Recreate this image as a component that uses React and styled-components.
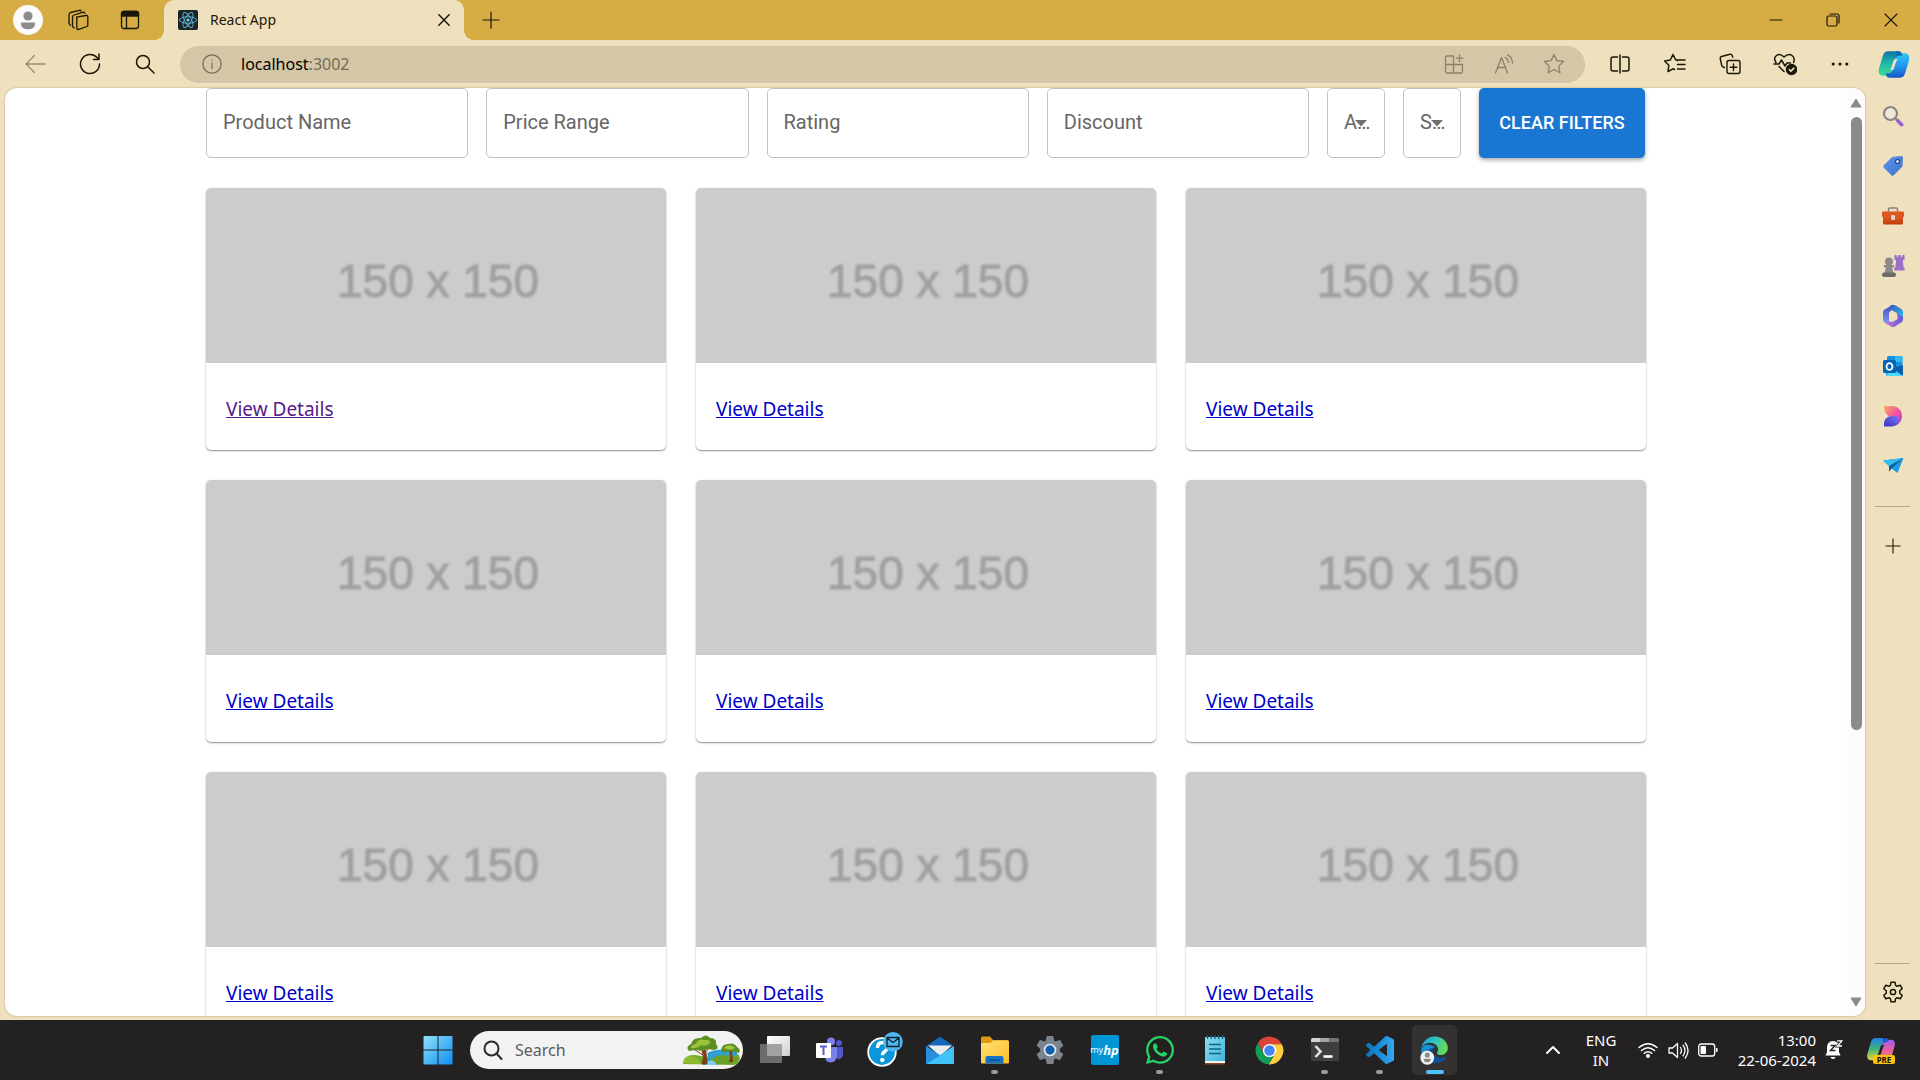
import React from "react";
import styled, { createGlobalStyle, css } from "styled-components";
import { FaWhatsapp } from "react-icons/fa";

const uiFont = '"Segoe UI", "Noto Sans", "Open Sans", sans-serif';
const appFont = 'Roboto, "Noto Sans", sans-serif';

const GlobalStyle = createGlobalStyle`
  * { box-sizing: border-box; }
  body { margin: 0; background: #efe1bd; font-family: ${uiFont}; }
  button { border: 0; padding: 0; background: none; color: inherit; font: inherit; cursor: pointer; }
  svg { display: block; flex: none; }
`;

/* ---------- window ---------- */

const Window = styled.div`
  display: grid;
  grid-template-rows: 40px 48px minmax(0, 1fr) 60px;
  height: 100vh;
  overflow: hidden;
`;

const TitleBar = styled.header`
  display: flex;
  align-items: stretch;
  background: #d6ad45;
  color: #1a1608;
`;

const IconButton = styled.button`
  display: flex;
  align-items: center;
  justify-content: center;
  width: ${(p) => p.$width || 55}px;
  height: ${(p) => p.$height || 40}px;
  flex: none;
  color: ${(p) => p.$color || "#1a1608"};
`;

const TitleTools = styled.div`
  display: flex;
  width: 164px;
`;

const Tab = styled.div`
  position: relative;
  display: flex;
  align-items: center;
  width: 300px;
  padding-left: 14px;
  border-radius: 10px 10px 0 0;
  background: #efe1bd;

  &::before,
  &::after {
    content: "";
    position: absolute;
    bottom: 0;
    width: 10px;
    height: 10px;
  }
  &::before {
    right: 100%;
    background: radial-gradient(circle at 0 0, transparent 10px, #efe1bd 10px);
  }
  &::after {
    left: 100%;
    background: radial-gradient(circle at 100% 0, transparent 10px, #efe1bd 10px);
  }
`;

const TabTitle = styled.span`
  flex: 1;
  padding-left: 12px;
  font-size: 14px;
  line-height: 20px;
`;

const WindowControls = styled.div`
  display: flex;
  margin-left: auto;
`;

const ToolBar = styled.div`
  display: flex;
  align-items: center;
  padding-left: 7px;
  background: #efe1bd;
`;

const AddressBar = styled.div`
  display: flex;
  align-items: center;
  flex: 1;
  height: 37px;
  margin: 0 7px 0 8px;
  padding-left: 4px;
  padding-right: 6px;
  border-radius: 19px;
  background: #d4c6a6;
`;

const Address = styled.div`
  flex: 1;
  padding-left: 2px;
  font-size: 16px;
  line-height: 24px;
  color: #000;
`;

const Port = styled.span`
  color: #746b58;
`;

const Body = styled.div`
  display: flex;
  min-height: 0;
`;

const Page = styled.main`
  display: flex;
  flex: 1;
  min-width: 0;
  margin: 0 0 4px 5px;
  border-radius: 12px;
  overflow: hidden;
  background: #fff;
  box-shadow: 0 0 2px rgba(90, 70, 10, 0.45);
`;

const PageContent = styled.div`
  flex: 1;
  min-width: 0;
  overflow: hidden;
`;

const Container = styled.div`
  width: 100%;
  max-width: 1440px;
  margin: 0 auto;
`;

/* ---------- filters ---------- */

const Filters = styled.form`
  display: flex;
  gap: 18px;
  height: 70px;
  margin: 0 1px 30px 0;
`;

const Field = styled.div`
  display: grid;
  grid-template: minmax(0, 1fr) / minmax(0, 1fr);
  align-items: center;
  ${(p) =>
    p.$compact
      ? css`
          flex: none;
          width: 58px;
        `
      : css`
          flex: 1;
          min-width: 0;
        `}
  > * {
    grid-area: 1 / 1;
  }
`;

const FieldLabel = styled.label`
  z-index: 1;
  padding-left: 17px;
  padding-bottom: 2px;
  overflow: hidden;
  white-space: nowrap;
  pointer-events: none;
  font: 20px/28px ${appFont};
  color: #666;
`;

const controlBox = css`
  width: 100%;
  height: 70px;
  padding: 0 17px;
  border: 1px solid #c0c0c0;
  border-radius: 5px;
  background: #fff;
  font: 20px/28px ${appFont};
  color: #222;
  outline: none;
  appearance: none;
`;

const TextInput = styled.input`
  ${controlBox}
`;

const Select = styled.select`
  ${controlBox}
`;

const Arrow = styled.svg`
  z-index: 2;
  justify-self: end;
  margin-right: 17px;
  pointer-events: none;
`;

const ClearButton = styled.button`
  flex: none;
  width: 166px;
  border-radius: 5px;
  background: #1976d2;
  box-shadow: 0 2px 4px rgba(0, 0, 0, 0.35);
  color: #fff;
  font: 500 18px/30px ${appFont};
`;

/* ---------- products ---------- */

const Products = styled.section`
  display: grid;
  grid-template-columns: repeat(3, minmax(0, 1fr));
  gap: 30px;
`;

const Card = styled.article`
  height: 262px;
  border-radius: 5px;
  overflow: hidden;
  background: #fff;
  box-shadow: 0 1px 1px rgba(0, 0, 0, 0.3), 0 1px 3px rgba(0, 0, 0, 0.18);
`;

const Thumb = styled.div`
  display: flex;
  align-items: center;
  justify-content: center;
  height: 175px;
  padding-top: 10px;
  padding-left: 4px;
  background: #ccc;
  color: #a0a0a0;
  font: 46px/56px "Liberation Sans", Arial, sans-serif;

  span {
    filter: blur(1px);
    -webkit-text-stroke: 1px #a0a0a0;
  }
`;

const CardBody = styled.div`
  padding: 32px 20px;
`;

const DetailsLink = styled.a`
  font-size: 19px;
  line-height: 28px;
  color: ${(p) => (p.$visited ? "#551a8b" : "#0000c8")};
  text-decoration: underline;
`;

/* ---------- scroll bar ---------- */

const ScrollTrack = styled.div`
  display: flex;
  flex-direction: column;
  align-items: center;
  width: 18px;
  padding: 10px 0 9px;
  background: #fcfcfc;
`;

const ScrollArea = styled.div`
  flex: 1;
  width: 11px;
  margin: 9px 0 4px;
`;

const ScrollThumb = styled.div`
  height: 70%;
  border-radius: 6px;
  background: #8b8b8b;
`;

/* ---------- sidebar ---------- */

const SideBar = styled.aside`
  display: flex;
  flex-direction: column;
  align-items: center;
  width: 55px;
  padding: 3px 0 3px;
`;

const Divider = styled.hr`
  width: 35px;
  height: 1px;
  margin: ${(p) => p.$margin};
  border: 0;
  background: #b5a988;
`;

/* ---------- taskbar ---------- */

const TaskBar = styled.footer`
  display: flex;
  align-items: center;
  background: #232122;
  color: #fff;
`;

const TaskSpacer = styled.div`
  flex: 410 1 0;
`;

const TaskGroup = styled.div`
  display: flex;
  align-items: center;
`;

const TaskButton = styled.button`
  position: relative;
  display: flex;
  align-items: center;
  justify-content: center;
  width: ${(p) => (p.$active ? 45 : 55)}px;
  height: 50px;
  margin: 0 ${(p) => (p.$active ? 5 : 0)}px;
  border-radius: 5px;
  background: ${(p) => (p.$active ? "#343132" : "none")};

  &::after {
    content: "";
    position: absolute;
    bottom: 1px;
    display: ${(p) => (p.$running || p.$active ? "block" : "none")};
    width: ${(p) => (p.$active ? 18 : 7)}px;
    height: 4px;
    border-radius: 2px;
    background: ${(p) => (p.$active ? "#4cc2ff" : "#9a9a9a")};
  }
`;

const SearchBox = styled.label`
  display: flex;
  align-items: center;
  width: 273px;
  height: 38px;
  margin: 0 4px 0 5px;
  padding: 0 2px 0 13px;
  border-radius: 19px;
  overflow: hidden;
  background: #f2f2f2;
`;

const SearchInput = styled.input`
  flex: 1;
  min-width: 0;
  padding: 0 0 0 12px;
  border: 0;
  outline: 0;
  background: none;
  font: 16px/24px ${uiFont};
  color: #333;

  &::placeholder {
    color: #5c5c5c;
    opacity: 1;
  }
`;

const MyHp = styled.span`
  display: flex;
  align-items: center;
  justify-content: center;
  width: 28px;
  height: 30px;
  border-radius: 2px;
  background: #0096d6;
  font: 9px/12px ${uiFont};

  i {
    font-size: 13px;
    font-weight: 700;
  }
`;

const Tray = styled.div`
  display: flex;
  flex: 448 1 0;
  align-items: center;
  justify-content: flex-end;
  padding-right: 10px;
`;

const TrayText = styled.div`
  width: ${(p) => p.$width}px;
  text-align: ${(p) => p.$align};
  font-size: 15px;
  line-height: 20px;
  white-space: nowrap;
`;

const SystemButton = styled.button`
  display: flex;
  align-items: center;
  justify-content: space-between;
  width: 102px;
  height: 50px;
  padding: 0 13px 0 9px;
`;

const PreTag = styled.span`
  position: absolute;
  left: 7px;
  top: 19px;
  width: 22px;
  border-radius: 2px;
  background: #ffc20e;
  color: #111;
  font: 700 8px/9px ${uiFont};
  text-align: center;
`;

const Stack = styled.span`
  position: relative;
  display: block;
`;

/* ---------- drawings ---------- */

const Line = ({ s = 22, vb = 24, w = 1.3, children, ...rest }) => (
  <svg width={s} height={s} viewBox={`0 0 ${vb} ${vb}`} fill="none" stroke="currentColor" strokeWidth={w} strokeLinecap="round" strokeLinejoin="round" aria-hidden="true" {...rest}>
    {children}
  </svg>
);

const Art = ({ w = 30, h = 30, vb = "0 0 30 30", children }) => (
  <svg width={w} height={h} viewBox={vb} aria-hidden="true">
    {children}
  </svg>
);

const Grad = ({ id, from, mid, to, x1 = 0, y1 = 0, x2 = 1, y2 = 1 }) => (
  <linearGradient id={id} x1={x1} y1={y1} x2={x2} y2={y2}>
    <stop offset="0" stopColor={from} />
    {mid && <stop offset="0.5" stopColor={mid} />}
    <stop offset="1" stopColor={to} />
  </linearGradient>
);

const ProfileIcon = () => (
  <Art>
    <circle cx="15" cy="15" r="15" fill="#fbfbfb" />
    <circle cx="15" cy="11" r="4.6" fill="#8c8c8c" />
    <path d="M8 17.5h14v1.5c0 3.500-3 5.200-7 5.200s-7-1.700-7-5.200z" fill="#8c8c8c" />
  </Art>
);

const WorkspacesIcon = () => (
  <Line s={22} vb={22}>
    <path d="M9.500 8.200 19 6.500q1.600-.3 1.800 1.200v8.500q0 1-1 1.300l-8 2.900q-1.800.5-2-1.200V10q0-1.400-.3-1.800z" />
    <path d="M5.500 17.500V8q0-1.500 1.600-2l9-2.800M2 14.500V5.500Q2 4 3.500 3.500L12.500 1.300M2 14.500l1.500 1.800M5.500 17.500l1.600 1.500M12.500 1.300q1-.2 1.600.7M16.500 3.200q1-.1 1.400 1" />
  </Line>
);

const VerticalTabsIcon = () => (
  <Line s={20} vb={20}>
    <rect x="1.500" y="1.500" width="17" height="17" rx="2.500" />
    <path d="M1.500 6V3.500q0-2 2-2h13q2 0 2 2V6z" fill="currentColor" />
    <path d="M6.500 6v12.500" />
  </Line>
);

const ReactLogo = () => (
  <Art w={20} h={20} vb="0 0 20 20">
    <rect width="20" height="20" rx="2" fill="#1d2227" />
    <g fill="none" stroke="#58b9d6" strokeWidth="0.9">
      <ellipse cx="10" cy="10" rx="8.500" ry="3.300" />
      <ellipse cx="10" cy="10" rx="8.500" ry="3.300" transform="rotate(60 10 10)" />
      <ellipse cx="10" cy="10" rx="8.500" ry="3.300" transform="rotate(120 10 10)" />
    </g>
    <circle cx="10" cy="10" r="1.600" fill="#6fd3ef" />
  </Art>
);

const CrossIcon = ({ s, w = 1.3 }) => (
  <Line s={s} vb={14} w={w}>
    <path d="M1 1l12 12M13 1L1 13" />
  </Line>
);

const PlusIcon = ({ s }) => (
  <Line s={s} vb={18} w={1.2}>
    <path d="M9 1v16M1 9h16" />
  </Line>
);

const StarPath = "M12 2.500l2.900 6.100 6.700.9-4.900 4.600 1.200 6.700-5.900-3.300-5.900 3.300 1.200-6.700L2.400 9.500l6.700-.9z";

const CopilotShape = ({ a, b, cut }) => (
  <>
    <path d="M10 2h9c2.500 0 3.300 1.500 3.900 4.300H20c-2.300 0-3.200 1.300-3.900 3.700L13 21c-.8 2.600-2.100 4-4.600 4H5c-4 0-5-3-4-7L4.500 6.500C5.500 3.300 7 2 10 2z" fill={`url(#${a})`} />
    <path transform="rotate(180 15 14.500)" d="M10 2h9c2.500 0 3.300 1.500 3.900 4.300H20c-2.300 0-3.200 1.300-3.900 3.700L13 21c-.8 2.600-2.100 4-4.600 4H5c-4 0-5-3-4-7L4.500 6.500C5.500 3.300 7 2 10 2z" fill={`url(#${b})`} />
    <path d="M16.100 10c.7-2.400 1.600-3.700 3.900-3.700h2.900C22.300 3.500 21.500 2 19 2h-3c2 1 1.500 4 .1 8z" fill={`url(#${a}d)`} />
    <path d="M15.600 9.500h3.200q-1.400 1-2 3l-2 6.500q-.3.500-.9.500h-2.700q1-1 1.500-2.700l1.900-6q.3-1.100 1-1.300z" fill={cut} />
  </>
);

const CopilotIcon = () => (
  <Art w={32} h={31} vb="0 0 30 29">
    <defs>
      <Grad id="cpA" from="#0a74a8" mid="#1fb9a5" to="#3ddc97" x2={0} />
      <Grad id="cpAd" from="#0b5f9c" to="#0f7fc4" />
      <Grad id="cpB" from="#1557c8" mid="#1f9bf0" to="#2ec5f2" x2={0} />
    </defs>
    <CopilotShape a="cpA" b="cpB" cut="#efe1bd" />
  </Art>
);

const SideSearch = () => (
  <Art w={22} h={22} vb="0 0 22 22">
    <circle cx="8.500" cy="8.500" r="6.500" fill="#efe8d8" stroke="#8a8780" strokeWidth="2.200" />
    <path d="M15.500 15.500l4.200 4.200" stroke="#9a63d4" strokeWidth="3.600" strokeLinecap="round" />
    <path d="M13 13l2 2" stroke="#8a8780" strokeWidth="2" />
  </Art>
);

const SideTag = () => (
  <Art w={22} h={22} vb="0 0 22 22">
    <defs><Grad id="tag" from="#5f96ea" to="#3f6fc9" /></defs>
    <path d="M11.500 1.800 19 1q2 0 2 2l-.5 7.500q-.1 1-.8 1.700l-8 8q-1.200 1.200-2.400 0l-7.500-7.500q-1.200-1.200 0-2.400l8-8q.700-.5 1.700-.5z" fill="url(#tag)" />
    <circle cx="15.500" cy="6.500" r="2" fill="#fff" stroke="#274a92" strokeWidth="1.300" />
  </Art>
);

const SideToolbox = () => (
  <Art w={24} h={20} vb="0 0 24 20">
    <defs><Grad id="tb" from="#e8662c" to="#c23a0c" x2={0} /></defs>
    <path d="M7.500 6V3.200q0-1.200 1.200-1.200h6.600q1.200 0 1.200 1.200V6" fill="none" stroke="#84807a" strokeWidth="1.500" />
    <rect x="2" y="8" width="20" height="10.500" rx="1.500" fill="url(#tb)" />
    <rect x="1" y="5.500" width="22" height="5.500" rx="1" fill="#e0561f" />
    <rect x="10.200" y="9" width="3.800" height="5" rx="1" fill="#dcd8d3" />
  </Art>
);

const SideChess = () => (
  <Art w={24} h={24} vb="0 0 24 24">
    <g fill="#8b8a88">
      <circle cx="8" cy="7.500" r="4" />
      <path d="M3 11h10v2.500h-2L12.500 19h-9L5 13.500H3z" />
      <rect x="1" y="18.500" width="14" height="4.500" rx="2" fill="#6d6b69" />
    </g>
    <path d="M13.500 1h2.200v1.800h1.600V1h2.400v1.800h1.600V1h2.200v5h-1.700l.8 7.500h1v3H13.300v-3h1L15.200 6h-1.700z" fill="#9a70c8" />
  </Art>
);

const Side365 = () => (
  <Art w={22} h={24} vb="0 0 22 24">
    <defs>
      <Grad id="mA" from="#4a48c9" to="#7fa5f0" x2={0} />
      <Grad id="mB" from="#3252b8" to="#35c1f1" />
      <Grad id="mC" from="#c77bd8" to="#6756d6" x2={1} y2={0} />
    </defs>
    <path d="M11 1 3 5.200Q1 6.300 1 8.500v7q0 2 1.700 3L7 21V8.500q0-1.500 1.500-2.300L14 3.300z" fill="url(#mA)" />
    <path d="M9 1.300Q11 .2 13 1.300l6 3.400q2 1.100 2 3.300v6.500L15 11V9.200L9.500 6 7 8.500V4.500q0-2.200 2-3.200z" fill="url(#mB)" />
    <path d="M21 13v2.500q0 2-1.800 3.100L13 22.500q-2 1.200-4 0L2.700 18.700 7 17.500l4 .2 4.500-2.800V10l5.500 3z" fill="url(#mC)" />
    <circle cx="11" cy="12" r="3.800" fill="#efe1bd" />
  </Art>
);

const SideOutlook = () => (
  <Art w={22} h={22} vb="0 0 22 22">
    <path d="M5 2.500Q5 1 6.500 1H19q1.500 0 1.500 1.500V12H5z" fill="#1490df" />
    <path d="M13 1h6q1.500 0 1.500 1.500V7H13z" fill="#35b8f1" />
    <path d="M4 10l9 4 8-4v9.500q0 1.500-1.500 1.500h-14Q4 21 4 19.500z" fill="#28a8ea" />
    <path d="M21 10v10.500L10 13z" fill="#0a5ea8" />
    <path d="M4 21h16L10 14z" fill="#50d9ff" />
    <rect x="1" y="5" width="13" height="13" rx="1.500" fill="#0364b8" />
    <ellipse cx="7.500" cy="11.500" rx="3" ry="3.400" fill="none" stroke="#fff" strokeWidth="1.800" />
  </Art>
);

const SideDesigner = () => (
  <Art w={20} h={22} vb="0 0 20 22">
    <defs>
      <Grad id="dA" from="#ffab5e" mid="#f0569c" to="#c634d2" />
      <Grad id="dB" from="#7a7bf5" to="#3a2fc0" x1={1} x2={0} />
    </defs>
    <path d="M1 1h8c6 0 10 4.500 10 10s-4 10-9 10c3-3 2-7-2-9-5-2-7-6-7-11z" fill="url(#dA)" />
    <path d="M1 21.500V19c0-5 3.500-8 8-8 4 0 7.500 1.500 8 3.500-1.500 4.500-5 7-9 7z" fill="url(#dB)" />
  </Art>
);

const SidePlane = () => (
  <Art w={22} h={18} vb="0 0 22 18">
    <path d="M1 3.500 21.500 1 15.500 16 9.500 11.500 7 14.500V9z" fill="#1e9ee0" />
    <path d="M1 3.500 21.500 1 7 9z" fill="#35bdf3" />
    <path d="M7 9 21.500 1 9.500 11.500 7 14.500z" fill="#0c5f9f" />
  </Art>
);

const gearPath = "M10 2.200h4l.6 3.200 1.500.9 3.100-1.100 2 3.500-2.500 2.100v2.400l2.500 2.100-2 3.500-3.100-1.100-1.500.9-.6 3.200h-4l-.6-3.200-1.500-.9-3.100 1.100-2-3.500 2.500-2.100v-2.400L2.800 8.700l2-3.500 3.100 1.100 1.500-.9z";

const GearIcon = () => (
  <Line s={24} vb={24} w={1.500}>
    <path d={gearPath} />
    <circle cx="12" cy="12" r="2.600" />
  </Line>
);

const StartIcon = () => (
  <Art w={30} h={30}>
    <defs><Grad id="win" from="#8fe2ff" to="#0b8df0" /></defs>
    <path d="M1.500 1H14.500V14.500H.500V2q0-1 1-1zM15.500 1H28.500q1 0 1 1V14.500H15.500zM.5 15.500H14.500V29.500H1.500q-1 0-1-1zM15.500 15.500H29.500V28.500q0 1-1 1H15.500z" fill="url(#win)" />
  </Art>
);

const ParkArt = () => (
  <Art w={58} h={30} vb="0 0 58 30">
    <path d="M0 29q2-10 12-9l12 2 12-7q12-2 20 5l1 4q-2 6-7 6z" fill="#79ab2c" />
    <path d="M24 18q8-4 16-3l14-1v6l-12 5-8 5H20q8-5 4-12z" fill="#2f9fd6" />
    <path d="M26 26q6-6 14-6t16 2q-2 7-8 7H33z" fill="#6aa02a" />
    <path d="M22 29q4-5 9-3l3 4H21z" fill="#7fd0ee" />
    <path d="M19 29q3-7 0-14l3-1q2 7 2 15zM12 15l8 5M27 12l-6 7" fill="#7a3f1d" stroke="#7a3f1d" strokeWidth="1" />
    <path d="M46 27q2-5 0-11h3l1 11z" fill="#7a3f1d" />
    <path d="M6 16q-4-4 2-7Q10 2 18 3q5-5 9 0 7 0 6 6 4 5-2 6l-6-1-6 2-6-1z" fill="#5c8f24" />
    <path d="M8 13q0-4 5-4 2-6 8-4 6-1 6 3-4 4-9 2-4 4-10 3z" fill="#9dc23c" />
    <path d="M38 15q1-6 7-6 6-2 9 3 4 2 2 6l-9-2-6 2z" fill="#5c8f24" />
    <path d="M41 13q3-4 8-2l3 2q-5 3-11 0z" fill="#a5c83e" />
    <path d="M0 28q1-8 8-7 7 1 10 8z" fill="#8fbb2e" />
  </Art>
);

const TaskViewIcon = () => (
  <Art w={30} h={28} vb="0 0 30 28">
    <defs><Grad id="tv" from="#ffffff" to="#cfcfcf" /></defs>
    <rect y="8" width="22" height="19" rx="1" fill="#6d6d6d" />
    <rect x="7" y="0" width="23" height="20" rx="1" fill="url(#tv)" />
    <path d="M7 8h15v12H7z" fill="#a2a2a2" />
  </Art>
);

const TeamsIcon = () => (
  <Art w={28} h={26} vb="0 0 28 26">
    <circle cx="23" cy="6" r="3" fill="#5059c9" />
    <path d="M19 10h8v8q-1 5-6 4z" fill="#5059c9" />
    <circle cx="15" cy="4.500" r="4" fill="#7b83eb" />
    <path d="M9 10h12v9q-1 6.500-6.500 6.500T9 19z" fill="#7b83eb" />
    <rect x="0" y="6" width="15" height="15" rx="1" fill="#fff" />
    <path d="M4 9.500h7M7.500 9.500v8.500" stroke="#5b5fc7" strokeWidth="2" />
  </Art>
);

const HelpIcon = () => (
  <Art w={36} h={36} vb="0 0 36 36">
    <circle cx="15" cy="20" r="13.800" fill="#0a96d8" stroke="#fff" strokeWidth="1.800" />
    <path d="M10.500 16q0-5.500 5-5.500t5 4.500q0 2.500-2.500 4.300-2.500 1.600-2.500 4" fill="none" stroke="#fff" strokeWidth="3.400" />
    <circle cx="15.300" cy="28" r="2.200" fill="#fff" />
    <circle cx="26" cy="9.800" r="9.800" fill="#4cb8f0" />
    <path d="M20 5.500h12v9H20zM20 6l6 4.500L32 6" fill="none" stroke="#12222c" strokeWidth="1.300" />
  </Art>
);

const MailIcon = () => (
  <Art w={28} h={28} vb="0 0 28 28">
    <path d="M.5 10 14 .500 27.500 10z" fill="#1467b8" />
    <path d="M2 9.500h24L14 20z" fill="#e9eef3" />
    <path d="M0 10l14 9.500L28 10v16.500q0 1.500-1.500 1.500h-25Q0 28 0 26.500z" fill="#1f9bea" />
    <path d="M0 28 28 10v16.500q0 1.500-1.500 1.500z" fill="#42c3f7" />
    <path d="M0 10l14 9.500L0 28z" fill="#2a8ee0" />
  </Art>
);

const FolderIcon = () => (
  <Art w={28} h={28} vb="0 0 28 28">
    <defs><Grad id="fo" from="#ffe07a" to="#fdbf24" /></defs>
    <path d="M0 6V2Q0 .500 1.500.500H9L12 4H26q1 0 1 1v4H0z" fill="#dc9a13" />
    <path d="M0 7H9.500L12 4.500H27q1 0 1 1V26.500q0 1-1 1H1q-1 0-1-1z" fill="url(#fo)" />
    <path d="M4.500 27.500V22q0-2 2-2h14q2 0 2 2v5.500z" fill="#1473c4" />
    <path d="M8.500 24h10" stroke="#0a4f92" strokeWidth="1.600" />
  </Art>
);

const SettingsIcon = () => (
  <Art w={30} h={30} vb="1 1 22 22">
    <path d={gearPath} fill="#7c858e" stroke="#7c858e" strokeLinejoin="round" />
    <circle cx="12" cy="12" r="4" fill="#0f5fae" stroke="#e8ecf0" strokeWidth="1.200" />
  </Art>
);

const NotepadIcon = () => (
  <Art w={22} h={30} vb="0 0 22 30">
    <defs><Grad id="np" from="#8de0f2" to="#3db2d8" /></defs>
    <rect x="1" y="2" width="20" height="25" rx="1" fill="url(#np)" />
    <path d="M1 26h20v2H1z" fill="#f2f2f2" />
    <path d="M1 28h20v1.500H1z" fill="#8a4a20" />
    <path d="M3.500 0v4M7.300 0v4M11 0v4M14.700 0v4M18.500 0v4" stroke="#1b5f7a" strokeWidth="1.300" />
    <path d="M5 9.500h12M5 14h12M5 18.500h12" stroke="#14647f" strokeWidth="1.500" />
  </Art>
);

const ChromeIcon = () => (
  <Art w={29} h={31} vb="1 1 46 46">
    {[["#db4437", 0], ["#ffcd40", 120], ["#0f9d58", 240]].map(([c, r]) => (
      <path key={c} d="M24 24V14h19.600A22 22 0 0 0 5.540 12.030L15.340 29z" fill={c} transform={`rotate(${r} 24 24)`} />
    ))}
    <circle cx="24" cy="24" r="10.500" fill="#fff" />
    <circle cx="24" cy="24" r="8.300" fill="#4285f4" />
  </Art>
);

const TerminalIcon = () => (
  <Art w={28} h={24} vb="0 0 28 24">
    <rect width="28" height="23" rx="1.500" fill="#3e3e3e" />
    <path d="M1.500 0H9v4H0V1.500Q0 0 1.500 0z" fill="#d2d2d2" />
    <path d="M9 0h9.500v4H9z" fill="#a5a5a5" />
    <path d="M18.500 0h8Q28 0 28 1.500V4h-9.500z" fill="#747474" />
    <path d="M4.500 8l5 5.500-5 5.500" fill="none" stroke="#e2e2e2" strokeWidth="2.600" />
    <path d="M12.500 18.500h9" stroke="#fff" strokeWidth="2.600" />
  </Art>
);

const CodeIcon = () => (
  <Art w={28} h={30} vb="0 0 24 24">
    <defs><Grad id="vs" from="#0b72b8" mid="#1b8cd6" to="#35a8f2" y2={0} /></defs>
    <path d="M23.150 2.587L18.210.210a1.494 1.494 0 0 0-1.705.290l-9.460 8.630-4.120-3.128a.999.999 0 0 0-1.276.057L.327 7.261A1 1 0 0 0 .326 8.740L3.899 12 .326 15.260a1 1 0 0 0 .001 1.479L1.650 17.940a.999.999 0 0 0 1.276.057l4.120-3.128 9.460 8.630a1.492 1.492 0 0 0 1.704.290l4.942-2.377A1.500 1.500 0 0 0 24 20.060V3.939a1.500 1.500 0 0 0-.850-1.352zm-5.146 14.861L10.826 12l7.178-5.448v10.896z" fill="url(#vs)" />
  </Art>
);

const EdgeIcon = () => (
  <Art w={29} h={31} vb="0 0 48 50">
    <defs>
      <Grad id="edA" from="#1a9fd8" mid="#2fc2c8" to="#5fdc5a" y2={0.3} />
      <Grad id="edB" from="#1b9de2" to="#0c59a4" />
    </defs>
    <path d="M2 26c0 12 10 20 22 20 9 0 17-5 20-11-6 4-19 3-23-5-2-5 1-9 4-10C18 13 3 14 2 26z" fill="url(#edB)" />
    <path d="M21 30c4 8 17 9 23 5-3 6-9 11-20 11-7 0-14-9-11-18 2-6 7-8 12-8-3 1-6 5-4 10z" fill="#0e4f9b" />
    <path d="M2 24C3 11 12 2 24 2c13 0 22 9 22 19 0 8-6 11.500-11 11.500S28 31 28 29c0-1 2-2 2-6 0-6-6-11-13-11-8 0-14 5-15 12z" fill="url(#edA)" />
    <circle cx="12" cy="37" r="11.500" fill="#f3f3f3" />
    <circle cx="12" cy="32.500" r="4.200" fill="#8a8a8a" />
    <path d="M6 38.500h12q0 6-6 6t-6-6z" fill="#8a8a8a" />
  </Art>
);

const WifiIcon = () => (
  <Line s={20} vb={20} w={1.500}>
    <path d="M1 7.500q9-7.500 18 0M3.500 10.500q6.500-5.500 13 0M6.300 13.300q3.700-3 7.400 0" />
    <circle cx="10" cy="16" r="1.300" fill="currentColor" />
  </Line>
);

const VolumeIcon = () => (
  <Line s={21} vb={21} w={1.300}>
    <path d="M1 8h3.500L9.500 3.500v14L4.500 13H1zM12.500 7.500q2 3 0 6M15 5.200q4 5.300 0 10.600M17.300 3q5.500 7.500 0 15" />
  </Line>
);

const BatteryIcon = () => (
  <Art w={20} h={14} vb="0 0 20 14">
    <rect x="0.700" y="1" width="16" height="12" rx="2.500" fill="none" stroke="#fff" strokeWidth="1.300" />
    <path d="M18 5h.8q.9 0 .9 2t-.9 2H18z" fill="#fff" />
    <rect x="2.500" y="3" width="5.500" height="8" rx="1" fill="#fff" />
  </Art>
);

const BellIcon = () => (
  <Art w={18} h={20} vb="0 0 18 20">
    <path d="M8 1Q2 1.500 2 7.500V12L.500 15.500H15.500L14 12V7.500Q14 1 8 1z" fill="#fff" />
    <path d="M5.500 17h5q-.5 2-2.500 2t-2.500-2z" fill="#fff" />
    <path d="M5.500 5.500h4.500L5.500 10.500H10.500" fill="none" stroke="#232122" strokeWidth="1.400" />
    <path d="M11.500.5h5.500L13 6h4.500" fill="none" stroke="#232122" strokeWidth="3.200" />
    <path d="M12 .900h4.800L12.500 6h4.500" fill="none" stroke="#fff" strokeWidth="1.300" />
  </Art>
);

const CopilotPreIcon = () => (
  <Stack>
    <Art w={30} h={28} vb="0 0 30 29">
      <defs>
        <Grad id="cqA" from="#1f7fe8" mid="#3fb37a" to="#e8d43a" x2={0} />
        <Grad id="cqAd" from="#1746c0" to="#2a6fe6" />
        <Grad id="cqB" from="#f7a24a" mid="#ee5f9d" to="#a35bf0" x2={0} />
      </defs>
      <CopilotShape a="cqA" b="cqB" cut="#232122" />
    </Art>
    <PreTag>PRE</PreTag>
  </Stack>
);

/* ---------- data ---------- */

const textFilters = [
  ["name", "Product Name"],
  ["price", "Price Range"],
  ["rating", "Rating"],
  ["discount", "Discount"],
];

const selectFilters = [
  ["availability", "A…"],
  ["sort", "S…"],
];

const products = Array.from({ length: 9 }, (_, i) => ({ id: i + 1, visited: i === 0 }));

const sideApps = [
  ["Search", SideSearch],
  ["Shopping", SideTag],
  ["Tools", SideToolbox],
  ["Games", SideChess],
  ["Microsoft 365", Side365],
  ["Outlook", SideOutlook],
  ["Designer", SideDesigner],
  ["Drop", SidePlane],
];

const taskApps = [
  ["Task view", <TaskViewIcon />],
  ["Teams", <TeamsIcon />],
  ["Help", <HelpIcon />],
  ["Mail", <MailIcon />],
  ["File Explorer", <FolderIcon />, "running"],
  ["Settings", <SettingsIcon />],
  ["HP", <MyHp>my<i>hp</i></MyHp>],
  ["WhatsApp", <FaWhatsapp size={32} color="#25d366" />, "running"],
  ["Notepad", <NotepadIcon />],
  ["Chrome", <ChromeIcon />],
  ["Terminal", <TerminalIcon />, "running"],
  ["Code", <CodeIcon />, "running"],
  ["Edge", <EdgeIcon />, "active"],
];

/* ---------- app ---------- */

function BrowserTitle() {
  return (
    <TitleBar>
      <TitleTools>
        <IconButton $width={56} aria-label="Profile"><ProfileIcon /></IconButton>
        <IconButton $width={43} aria-label="Workspaces"><WorkspacesIcon /></IconButton>
        <IconButton $width={62} aria-label="Tab actions"><VerticalTabsIcon /></IconButton>
      </TitleTools>
      <Tab>
        <ReactLogo />
        <TabTitle>React App</TabTitle>
        <IconButton $width={40} aria-label="Close tab"><CrossIcon s={12} w={1.700} /></IconButton>
      </Tab>
      <IconButton $width={54} aria-label="New tab"><PlusIcon s={18} /></IconButton>
      <WindowControls>
        <IconButton $width={57} aria-label="Minimize"><Line s={14} vb={14} w={1.200}><path d="M1 7h12" /></Line></IconButton>
        <IconButton $width={58} aria-label="Restore">
          <Line s={14} vb={14} w={1.200}><rect x="1" y="3" width="10" height="10" rx="1.500" /><path d="M4 1h7q2 0 2 2v7" /></Line>
        </IconButton>
        <IconButton $width={58} aria-label="Close window"><CrossIcon s={14} w={1.100} /></IconButton>
      </WindowControls>
    </TitleBar>
  );
}

function BrowserToolbar() {
  return (
    <ToolBar>
      <IconButton $color="#968c72" aria-label="Back">
        <Line s={22} vb={22}><path d="M21 11H2M10.500 2.500 2 11l8.500 8.500" /></Line>
      </IconButton>
      <IconButton aria-label="Refresh">
        <Line s={22} vb={22} w={1.500}><path d="M20.500 11A9.500 9.500 0 1 1 18 4.600l1.500 1.700M20 1v5.500h-5.500" /></Line>
      </IconButton>
      <IconButton aria-label="Search">
        <Line s={20} vb={20} w={1.500}><circle cx="8" cy="8" r="6.500" /><path d="M13 13l6 6" /></Line>
      </IconButton>
      <AddressBar>
        <IconButton $color="#746b58" aria-label="Site information">
          <Line s={20} vb={20} w={1.200}><circle cx="10" cy="10" r="9.200" /><path d="M10 9v5.500M10 6v.3" /></Line>
        </IconButton>
        <Address>localhost<Port>:3002</Port></Address>
        <IconButton $width={50} $color="#8b8169" aria-label="Install app">
          <Line s={20} vb={20}><path d="M9.500 2H3Q1.500 2 1.500 3.500v14Q1.500 19 3 19h14q1.500 0 1.500-1.500V10.500h-17M9.500 2v17M15.500 1v6.500M12.300 4.200h6.500" /></Line>
        </IconButton>
        <IconButton $width={50} $color="#8b8169" aria-label="Read aloud">
          <Line s={20} vb={20}><path d="M1.500 19 7.500 3.500 13.500 19M3.600 13.500h7.800M11 3.500q3 1.200 3.500 5M13.500.800q4.500 2 5 8.200" /></Line>
        </IconButton>
        <IconButton $width={50} $color="#8b8169" aria-label="Add to favorites">
          <Line s={24} vb={24}><path d={StarPath} /></Line>
        </IconButton>
      </AddressBar>
      <IconButton aria-label="Split screen">
        <Line s={20} vb={20} w={1.500}><path d="M7.500 3H3Q1 3 1 5v10q0 2 2 2h4.500M12.500 3H17q2 0 2 2v10q0 2-2 2h-4.500M10 1v18" /></Line>
      </IconButton>
      <IconButton aria-label="Favorites">
        <Line s={22} vb={22} w={1.500}><path d="M13.500 7.500 11.500 6.500 9 1.500 6.300 7l-5.800 1 4.300 4.300L4 18.500l5-2.700 1.500.7M14 7h7M13.500 11.500H21M13.500 16H21" /></Line>
      </IconButton>
      <IconButton aria-label="Collections">
        <Line s={22} vb={22} w={1.400}><rect x="8" y="7.500" width="13" height="13" rx="2" /><path d="M14.500 11v6.500M11.200 14.200h6.600M5.500 14.500 4.200 14Q3 13.500 2.600 12L1.200 5.500Q1 4 2.500 3.500L11 1.200q1.600-.3 2.100 1l.7 2" /></Line>
      </IconButton>
      <IconButton aria-label="Browser essentials">
        <Line s={24} vb={24} w={1.500}>
          <path d="M3 10.500Q0 6 3.500 3.500T11 5q4.500-4 8-1.500t1.500 7M1 12h5l2.500-4 3.500 6 2-3h3.500M6 14.500l5 5" />
          <circle cx="18.500" cy="17.500" r="5" fill="currentColor" />
          <path d="M16.300 17.500l1.600 1.600 3-3" stroke="#efe1bd" />
        </Line>
      </IconButton>
      <IconButton aria-label="More">
        <Line s={18} vb={18} w={0}><g fill="currentColor"><circle cx="2.200" cy="9" r="1.600" /><circle cx="9" cy="9" r="1.600" /><circle cx="15.800" cy="9" r="1.600" /></g></Line>
      </IconButton>
      <IconButton $width={53} aria-label="Copilot"><CopilotIcon /></IconButton>
    </ToolBar>
  );
}

function FilterBar() {
  return (
    <Filters onSubmit={(e) => e.preventDefault()}>
      {textFilters.map(([id, label]) => (
        <Field key={id}>
          <TextInput id={id} type="text" />
          <FieldLabel htmlFor={id}>{label}</FieldLabel>
        </Field>
      ))}
      {selectFilters.map(([id, label]) => (
        <Field key={id} $compact>
          <Select id={id} />
          <FieldLabel htmlFor={id}>{label}</FieldLabel>
          <Arrow width="14" height="7" viewBox="0 0 14 7" aria-hidden="true"><path d="M1 0h12L7 6.500z" fill="#707070" /></Arrow>
        </Field>
      ))}
      <ClearButton type="reset">CLEAR FILTERS</ClearButton>
    </Filters>
  );
}

function Task({ label, icon, state }) {
  return (
    <TaskButton aria-label={label} $running={state === "running"} $active={state === "active"}>
      {icon}
    </TaskButton>
  );
}

export default function App() {
  return (
    <Window>
      <GlobalStyle />
      <BrowserTitle />
      <BrowserToolbar />
      <Body>
        <Page>
          <PageContent>
            <Container>
              <FilterBar />
              <Products>
                {products.map((p) => (
                  <Card key={p.id}>
                    <Thumb><span>150 x 150</span></Thumb>
                    <CardBody>
                      <DetailsLink href={`#product-${p.id}`} $visited={p.visited}>View Details</DetailsLink>
                    </CardBody>
                  </Card>
                ))}
              </Products>
            </Container>
          </PageContent>
          <ScrollTrack aria-hidden="true">
            <Art w={12} h={10} vb="0 0 12 10"><path d="M6 1 11 9H1z" fill="#8b8b8b" stroke="#8b8b8b" strokeLinejoin="round" /></Art>
            <ScrollArea><ScrollThumb /></ScrollArea>
            <Art w={12} h={10} vb="0 0 12 10"><path d="M6 9 11 1H1z" fill="#8b8b8b" stroke="#8b8b8b" strokeLinejoin="round" /></Art>
          </ScrollTrack>
        </Page>
        <SideBar>
          {sideApps.map(([label, Icon]) => (
            <IconButton key={label} $height={50} aria-label={label}><Icon /></IconButton>
          ))}
          <Divider $margin="15px 0 14px" />
          <IconButton $height={50} aria-label="Customize"><PlusIcon s={16} /></IconButton>
          <Divider $margin="auto 0 3px" />
          <IconButton $height={50} aria-label="Settings"><GearIcon /></IconButton>
        </SideBar>
      </Body>
      <TaskBar>
        <TaskSpacer />
        <TaskGroup>
          <Task label="Start" icon={<StartIcon />} />
          <SearchBox>
            <Line s={20} vb={20} w={2} color="#2b2b2b"><circle cx="8.500" cy="8.500" r="7" /><path d="M13.500 13.500l5 5.500" /></Line>
            <SearchInput type="text" placeholder="Search" aria-label="Search" />
            <ParkArt />
          </SearchBox>
          {taskApps.map(([label, icon, state]) => (
            <Task key={label} label={label} icon={icon} state={state} />
          ))}
        </TaskGroup>
        <Tray>
          <IconButton $width={40} $color="#fff" aria-label="Hidden icons">
            <Line s={14} vb={14} w={1.900}><path d="M1 10l6-6 6 6" /></Line>
          </IconButton>
          <TrayText $width={56} $align="center">ENG<br />IN</TrayText>
          <SystemButton aria-label="Network, volume, battery"><WifiIcon /><VolumeIcon /><BatteryIcon /></SystemButton>
          <TrayText $width={85} $align="right">13:00<br />22-06-2024</TrayText>
          <IconButton $width={36} $color="#fff" aria-label="Notifications"><BellIcon /></IconButton>
          <IconButton $width={58} aria-label="Copilot preview"><CopilotPreIcon /></IconButton>
        </Tray>
      </TaskBar>
    </Window>
  );
}
